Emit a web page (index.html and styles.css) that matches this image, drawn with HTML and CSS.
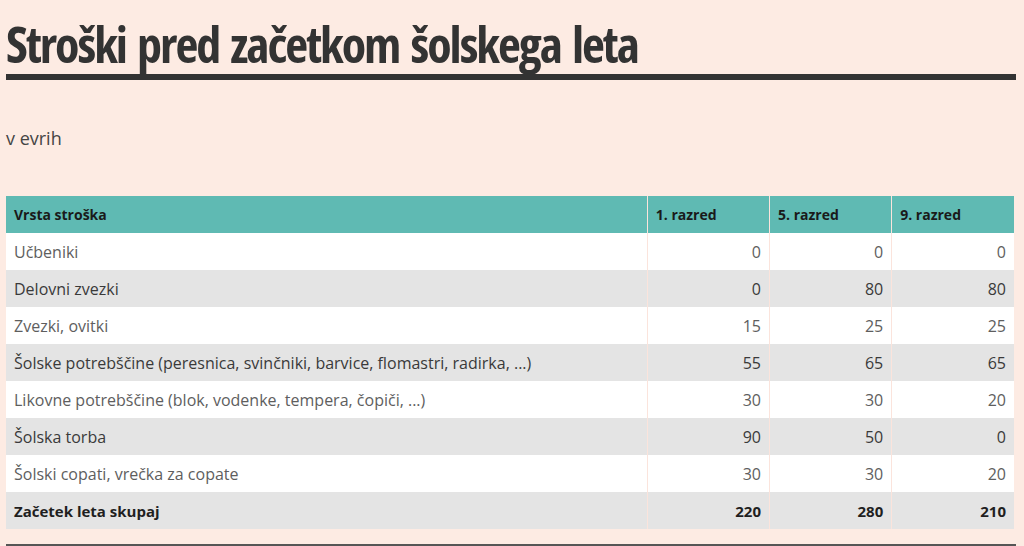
FILE: index.html
```html
<!DOCTYPE html>
<html lang="sl">
<head>
<meta charset="utf-8">
<title>Stroški pred začetkom šolskega leta</title>
<link rel="stylesheet" href="styles.css">
</head>
<body>
<main class="page">
  <header class="head">
    <h1 class="title"><span class="title-text">Stroški pred začetkom šolskega leta</span></h1>
    <div class="rule"></div>
  </header>
  <p class="unit">v evrih</p>
  <table class="costs">
    <colgroup>
      <col class="c-name">
      <col class="c-num">
      <col class="c-num">
      <col class="c-num">
    </colgroup>
    <thead>
      <tr><th>Vrsta stroška</th><th>1. razred</th><th>5. razred</th><th>9. razred</th></tr>
    </thead>
    <tbody>
      <tr><td>Učbeniki</td><td class="n">0</td><td class="n">0</td><td class="n">0</td></tr>
      <tr><td>Delovni zvezki</td><td class="n">0</td><td class="n">80</td><td class="n">80</td></tr>
      <tr><td>Zvezki, ovitki</td><td class="n">15</td><td class="n">25</td><td class="n">25</td></tr>
      <tr><td>Šolske potrebščine (peresnica, svinčniki, barvice, flomastri, radirka, ...)</td><td class="n">55</td><td class="n">65</td><td class="n">65</td></tr>
      <tr><td>Likovne potrebščine (blok, vodenke, tempera, čopiči, ...)</td><td class="n">30</td><td class="n">30</td><td class="n">20</td></tr>
      <tr><td>Šolska torba</td><td class="n">90</td><td class="n">50</td><td class="n">0</td></tr>
      <tr><td>Šolski copati, vrečka za copate</td><td class="n">30</td><td class="n">30</td><td class="n">20</td></tr>
      <tr class="total"><td>Začetek leta skupaj</td><td class="n">220</td><td class="n">280</td><td class="n">210</td></tr>
    </tbody>
  </table>
  <div class="rule-bottom"></div>
</main>
</body>
</html>
```
FILE: styles.css
```css
html, body {
  margin: 0;
  padding: 0;
  background: #fdebe3;
}
body {
  font-family: "Open Sans", Lato, sans-serif;
  color: #444;
}
.page {
  display: flex;
  flex-direction: column;
  padding: 0 8px 0 6px;
  width: 1010px;
}
.head {
  display: flex;
  flex-direction: column;
  padding-top: 16px;
}
.title {
  margin: 0;
  font-family: "Open Sans", "Liberation Sans Narrow", sans-serif;
  font-stretch: 75%;
  font-weight: 700;
  font-size: 50px;
  line-height: 56px;
  height: 58px;
  color: #333;
  letter-spacing: -2px;
  word-spacing: 4px;
  white-space: nowrap;
}
.title-text {
  display: inline-block;
}
.rule {
  height: 6px;
  background: #333;
}
.unit {
  margin: 46px 0 0 0;
  font-size: 18px;
  line-height: 24px;
  color: #444;
  height: 24px;
}
.costs {
  margin-top: 46px;
  width: 1008px;
  border-collapse: collapse;
  table-layout: fixed;
  font-size: 16px;
}
.c-name { width: 640px; }
.c-num { width: 122px; }
.costs th, .costs td {
  height: 37px;
  padding: 0 8px;
  box-sizing: border-box;
  border-left: 1px solid #fbe4dc;
  text-align: left;
  white-space: nowrap;
}
.costs th:first-child, .costs td:first-child {
  border-left: none;
}
.costs th {
  background: #5fbab3;
  color: #1a1a1a;
  font-weight: 700;
  font-size: 14px;
}
.costs tbody tr:nth-child(odd) { background: #ffffff; color: #5e5e5e; }
.costs tbody tr:nth-child(even) { background: #e4e4e4; color: #3a3a3a; }
.costs td.n { text-align: right; }
.costs tr.total td {
  font-weight: 700;
  color: #1f1f1f;
  font-size: 15px;
}
.rule-bottom {
  margin-top: 15px;
  height: 3px;
  background: #555;
}
```
